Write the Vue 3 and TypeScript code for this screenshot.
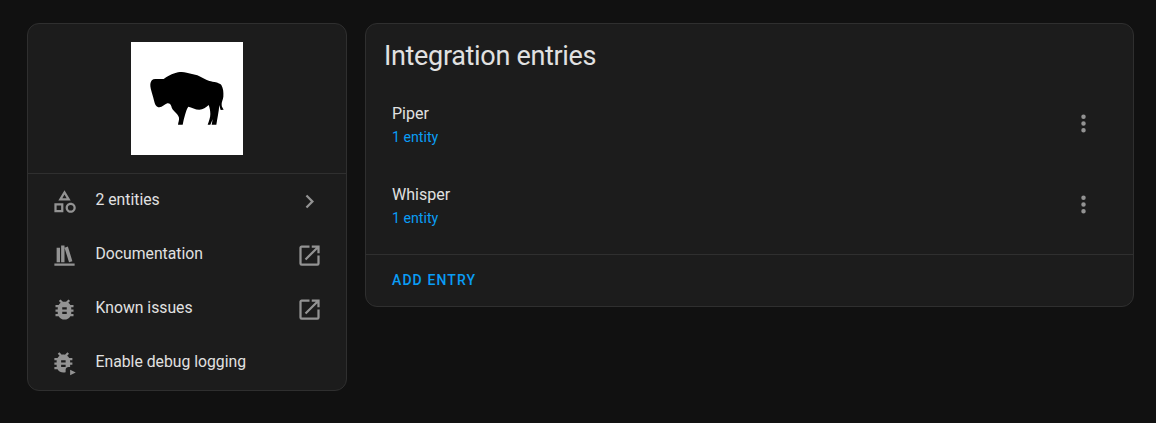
<script setup lang="ts">
const icons = {
  shape:
    "M11,13.5V21.5H3V13.5H11M9,15.5H5V19.5H9V15.5M12,2L17.5,11H6.5L12,2M12,5.86L10.08,9H13.92L12,5.86M17.5,13C20,13 22,15 22,17.5C22,20 20,22 17.5,22C15,22 13,20 13,17.5C13,15 15,13 17.5,13M17.5,15A2.5,2.5 0 0,0 15,17.5A2.5,2.5 0 0,0 17.5,20A2.5,2.5 0 0,0 20,17.5A2.5,2.5 0 0,0 17.5,15Z",
  bookshelf: "M9 3V18H12V3H9M12 5L16 18L19 17L15 4L12 5M5 5V18H8V5H5M3 19V21H21V19H3Z",
  bug: "M14,12H10V10H14M14,16H10V14H14M20,8H17.19C16.74,7.22 16.12,6.55 15.37,6.04L17,4.41L15.59,3L13.42,5.17C12.96,5.06 12.5,5 12,5C11.5,5 11.04,5.06 10.59,5.17L8.41,3L7,4.41L8.62,6.04C7.88,6.55 7.26,7.22 6.81,8H4V10H6.09C6.04,10.33 6,10.66 6,11V12H4V14H6V15C6,15.34 6.04,15.67 6.09,16H4V18H6.81C8.47,20.87 12.14,21.84 15,20.18C15.91,19.66 16.67,18.9 17.19,18H20V16H17.91C17.96,15.67 18,15.34 18,15V14H20V12H18V11C18,10.66 17.96,10.33 17.91,10H20V8Z",
  bugPlay:
    "M13,11H9V9H13M13,15H9V13H13M19,7H16.19C15.74,6.22 15.12,5.55 14.37,5.04L16,3.41L14.59,2L12.42,4.17C11.96,4.06 11.5,4 11,4C10.5,4 10.04,4.06 9.59,4.17L7.41,2L6,3.41L7.62,5.04C6.88,5.55 6.26,6.22 5.81,7H3V9H5.09C5.04,9.33 5,9.66 5,10V11H3V13H5V14C5,14.34 5.04,14.67 5.09,15H3V17H5.81C7.2,19.4 10,20.5 13,19.7V17.5C13,16.1 14.5,14.9 16,15.2L17,15H17V13H19V11H17V10C17,9.66 16.96,9.33 16.91,9H19V7ZM17,17.5V22.5L22,20Z",
  chevron: "M8.59,16.58L13.17,12L8.59,7.41L10,6L16,12L10,18L8.59,16.58Z",
  external:
    "M14,3V5H17.59L7.76,14.83L9.17,16.24L19,6.41V10H21V3M19,19H5V5H12V3H5C3.89,3 3,3.9 3,5V19A2,2 0 0,0 5,21H19A2,2 0 0,0 21,19V12H19V19Z",
  dots: "M12,16A2,2 0 0,1 14,18A2,2 0 0,1 12,20A2,2 0 0,1 10,18A2,2 0 0,1 12,16M12,10A2,2 0 0,1 14,12A2,2 0 0,1 12,14A2,2 0 0,1 10,12A2,2 0 0,1 12,10M12,4A2,2 0 0,1 14,6A2,2 0 0,1 12,8A2,2 0 0,1 10,6A2,2 0 0,1 12,4Z",
};

const links = [
  { label: "2 entities", icon: icons.shape, end: icons.chevron },
  { label: "Documentation", icon: icons.bookshelf, end: icons.external },
  { label: "Known issues", icon: icons.bug, end: icons.external },
  { label: "Enable debug logging", icon: icons.bugPlay, end: "" },
];

const entries = [
  { name: "Piper", count: "1 entity" },
  { name: "Whisper", count: "1 entity" },
];
</script>

<template>
  <div class="page">
    <div class="card info">
      <div class="logo-wrap">
        <svg class="logo" viewBox="33 36 336 339" preserveAspectRatio="none">
          <rect x="33" y="36" width="336" height="339" fill="#fff" />
          <path
            d="M91 162C92 152 98 146 108 147L131 147C140 140 152 134 164 130C174 126 188 125 200 128L232 136C245 141 255 149 268 153C280 156 297 157 304 165C310 175 311 188 310 200C309 210 304 216 305 225C305 231 309 235 311 239L302 240C300 235 299 230 298 225C297 235 296 245 294 255C292 265 291 274 289 284L275 284L278 268L271 284L263 284C267 273 271 263 271 252C271 242 269 233 266 225C258 232 249 239 238 239C226 239 215 232 205 230C200 236 198 246 195 255C192 265 190 274 188 284L174 284C175 276 178 270 177 263C175 256 170 251 165 246C159 241 155 235 154 229C152 223 148 219 142 220C134 223 127 231 118 232C109 231 105 223 103 215C101 206 98 198 96 190C94 181 90 171 91 162Z"
          />
        </svg>
      </div>
      <div class="links">
        <div v-for="link in links" :key="link.label" class="link-row">
          <svg class="icon" viewBox="0 0 24 24"><path :d="link.icon" fill-rule="evenodd" /></svg>
          <span class="link-label">{{ link.label }}</span>
          <svg v-if="link.end" class="icon" viewBox="0 0 24 24"><path :d="link.end" /></svg>
        </div>
      </div>
    </div>

    <div class="card entries">
      <h1 class="title">Integration entries</h1>
      <div class="entry-list">
        <div v-for="entry in entries" :key="entry.name" class="entry">
          <div class="entry-text">
            <div class="entry-name">{{ entry.name }}</div>
            <div class="entry-count">{{ entry.count }}</div>
          </div>
          <svg class="icon" viewBox="0 0 24 24"><path :d="icons.dots" /></svg>
        </div>
      </div>
      <div class="actions">
        <span class="add">ADD ENTRY</span>
      </div>
    </div>
  </div>
</template>

<style>
html,
body {
  background: #111111;
}
</style>

<style scoped>
.page {
  display: flex;
  align-items: flex-start;
  gap: 18px;
  padding: 23px 22px 32px 27px;
  font-family: Roboto, sans-serif;
  color: #e1e1e1;
}

.card {
  box-sizing: border-box;
  background: #1c1c1c;
  border: 1px solid #2f2f2f;
  border-radius: 12px;
}

.info {
  width: 320px;
  flex-shrink: 0;
}

.entries {
  flex: 1;
}

.logo-wrap {
  display: flex;
  justify-content: center;
  padding: 18px 0;
  border-bottom: 1px solid #2f2f2f;
}

.logo {
  display: block;
  width: 112px;
  height: 113px;
}

.link-row {
  display: flex;
  align-items: center;
  height: 54px;
  padding: 0 23px;
}

.icon {
  display: block;
  width: 27px;
  height: 27px;
  flex-shrink: 0;
  fill: #939393;
}

.link-label {
  flex: 1;
  margin-left: 17.5px;
  padding-bottom: 3px;
  font-size: 15.75px;
}

.title {
  height: 59px;
  margin: 0;
  padding: 16px 18px 0;
  box-sizing: border-box;
  font-size: 27px;
  font-weight: 400;
  line-height: 32px;
  letter-spacing: -0.324px;
}

.entry-list {
  padding-bottom: 9px;
  border-bottom: 1px solid #2f2f2f;
}

.entry {
  display: flex;
  align-items: center;
  justify-content: space-between;
  height: 81px;
  padding: 0 36px 0 26px;
}

.entry-text {
  padding-top: 2px;
}

.entry-name {
  font-size: 16px;
  line-height: 24px;
}

.entry-count {
  margin-top: 1px;
  font-size: 14.2px;
  line-height: 20px;
  color: #0a9df5;
}

.actions {
  display: flex;
  align-items: center;
  height: 51px;
  padding: 0 26px 2px;
  box-sizing: border-box;
}

.add {
  font-size: 14px;
  font-weight: 500;
  letter-spacing: 1.1px;
  color: #0a9df5;
}
</style>
